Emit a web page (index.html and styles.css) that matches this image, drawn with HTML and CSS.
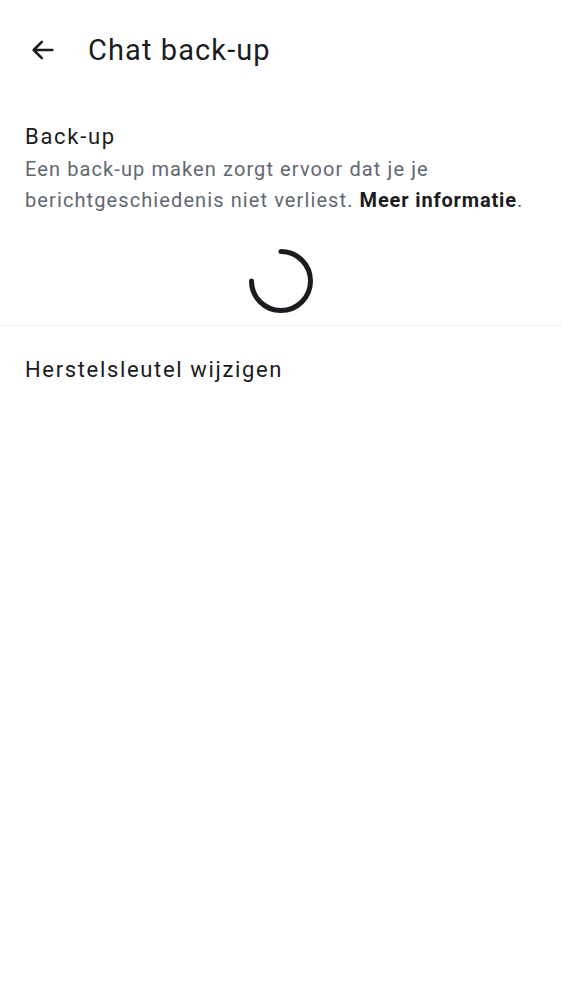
FILE: index.html
```html
<!DOCTYPE html>
<html>
<head>
<meta charset="utf-8">
<link rel="stylesheet" href="styles.css">
</head>
<body>
<header class="topbar">
  <button class="back" aria-label="Terug">
    <svg width="28" height="28" viewBox="0 0 24 24"><path d="M20 12H4.5M11 5l-7 7 7 7" fill="none" stroke="#1b1c20" stroke-width="2.2" stroke-linecap="round" stroke-linejoin="round" /></svg>
  </button>
  <h1 class="title">Chat back-up</h1>
</header>
<section class="section">
  <h2 class="sec-title">Back-up</h2>
  <p class="sec-desc">Een back-up maken zorgt ervoor dat je je berichtgeschiedenis niet verliest. <b class="link">Meer informatie</b>.</p>
  <div class="spinner-wrap">
    <svg class="spinner" width="70" height="70" viewBox="0 0 70 70">
      <path d="M35 5.5 A29.5 29.5 0 1 1 5.5 35" fill="none" stroke="#1b1c20" stroke-width="5" stroke-linecap="round"/>
    </svg>
  </div>
</section>
<div class="divider"></div>
<div class="row">Herstelsleutel wijzigen</div>
</body>
</html>
```
FILE: styles.css
```css
* { box-sizing: border-box; }
html, body { margin: 0; padding: 0; background: #fff; }
body { font-family: Roboto, "Noto Sans", sans-serif; color: #1b1c20; width: 562px; }
.topbar { display: flex; align-items: center; height: 100px; padding-left: 29px; }
.back { border: 0; background: none; padding: 0; width: 28px; height: 28px; display: flex; align-items: center; justify-content: center; }
.title { margin: 0 0 0 31px; font-size: 29px; font-weight: 400; letter-spacing: 1.1px; }
.section { padding: 22px 25px 0 25px; }
.sec-title { margin: 0; font-size: 22px; font-weight: 400; line-height: 30px; letter-spacing: 1.7px; }
.sec-desc { margin: 2px 0 0 0; font-size: 20px; line-height: 31px; color: #626872; letter-spacing: 1.1px; }
.sec-desc .link { color: #1b1c20; font-weight: 700; letter-spacing: 0.85px; }
.spinner-wrap { display: flex; justify-content: center; padding: 30px 0 9px 0; }
.divider { height: 1px; background: #efeff1; }
.row { padding: 29px 25px; font-size: 22px; line-height: 30px; letter-spacing: 1.65px; }
```
